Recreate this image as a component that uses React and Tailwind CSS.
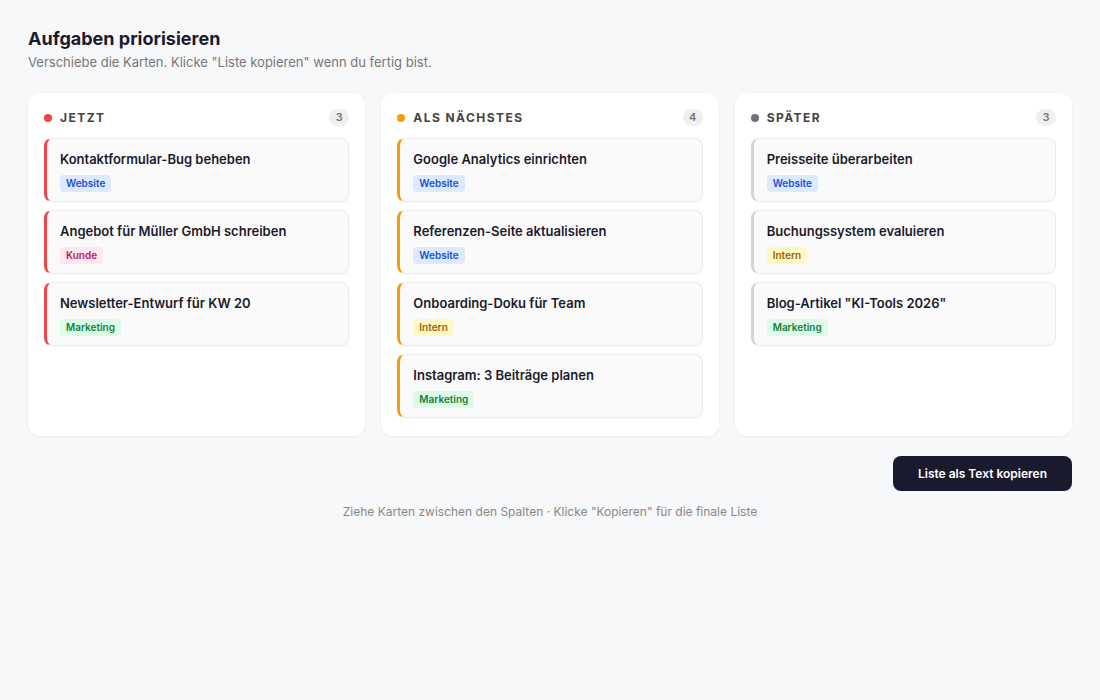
import React from "react";

const tags = {
  Website: "bg-[#dbeafe] text-[#1d4ed8]",
  Kunde: "bg-[#fce7f3] text-[#be185d]",
  Marketing: "bg-[#dcfce7] text-[#15803d]",
  Intern: "bg-[#fef9c3] text-[#a16207]",
};

const columns = [
  {
    title: "JETZT",
    dot: "bg-[#ef4444]",
    border: "border-l-[#ef4444]",
    cards: [
      ["Kontaktformular-Bug beheben", "Website"],
      ["Angebot für Müller GmbH schreiben", "Kunde"],
      ["Newsletter-Entwurf für KW 20", "Marketing"],
    ],
  },
  {
    title: "ALS NÄCHSTES",
    dot: "bg-[#f59e0b]",
    border: "border-l-[#f59e0b]",
    cards: [
      ["Google Analytics einrichten", "Website"],
      ["Referenzen-Seite aktualisieren", "Website"],
      ["Onboarding-Doku für Team", "Intern"],
      ["Instagram: 3 Beiträge planen", "Marketing"],
    ],
  },
  {
    title: "SPÄTER",
    dot: "bg-[#6b7280]",
    border: "border-l-[#d1d5db]",
    cards: [
      ["Preisseite überarbeiten", "Website"],
      ["Buchungssystem evaluieren", "Intern"],
      ['Blog-Artikel "KI-Tools 2026"', "Marketing"],
    ],
  },
];

const App = () => {
  return (
    <main className="min-h-[700px] bg-[#f7f8fa] px-7 pt-[27px] font-[family-name:Inter,sans-serif] text-[#1a1a2e]">
      <h1 className="text-[18px] font-bold leading-6">Aufgaben priorisieren</h1>
      <p className="mt-[3px] text-[13px] leading-4 text-[#777]">
        Verschiebe die Karten. Klicke "Liste kopieren" wenn du fertig bist.
      </p>

      <div className="mt-[23px] grid grid-cols-3 gap-4">
        {columns.map((col) => (
          <section
            key={col.title}
            className="h-[343px] rounded-xl bg-white p-4 shadow-[0_1px_3px_rgba(0,0,0,0.06)]"
          >
            <div className="mb-3 flex h-[17px] items-center justify-between">
              <div className="flex items-center gap-2">
                <span className={`h-2 w-2 rounded-full ${col.dot}`}></span>
                <span className="text-[12px] font-bold tracking-[0.12em] text-[#444]">
                  {col.title}
                </span>
              </div>
              <span className="flex h-[17px] min-w-[20px] items-center justify-center rounded-full bg-[#f0f0f0] px-1.5 text-[11px] font-semibold text-[#777]">
                {col.cards.length}
              </span>
            </div>
            <div className="flex flex-col gap-2">
              {col.cards.map(([title, tag]) => (
                <div
                  key={title}
                  className={`h-16 rounded-lg border border-[#eaeaea] border-l-[3px] ${col.border} bg-[#fafafa] px-[13px] pt-3`}
                >
                  <div className="text-[13px] font-semibold leading-4">{title}</div>
                  <span
                    className={`mt-2 inline-block rounded px-1.5 py-[1px] text-[10px] font-semibold ${tags[tag]}`}
                  >
                    {tag}
                  </span>
                </div>
              ))}
            </div>
          </section>
        ))}
      </div>

      <div className="mt-5 flex justify-end">
        <button className="h-[35px] w-[179px] rounded-lg bg-[#1a1a2e] text-[12px] font-semibold text-white">
          Liste als Text kopieren
        </button>
      </div>
      <p className="mt-3 text-center text-[12px] text-[#888]">
        Ziehe Karten zwischen den Spalten · Klicke "Kopieren" für die finale Liste
      </p>
    </main>
  );
};

export default App;
